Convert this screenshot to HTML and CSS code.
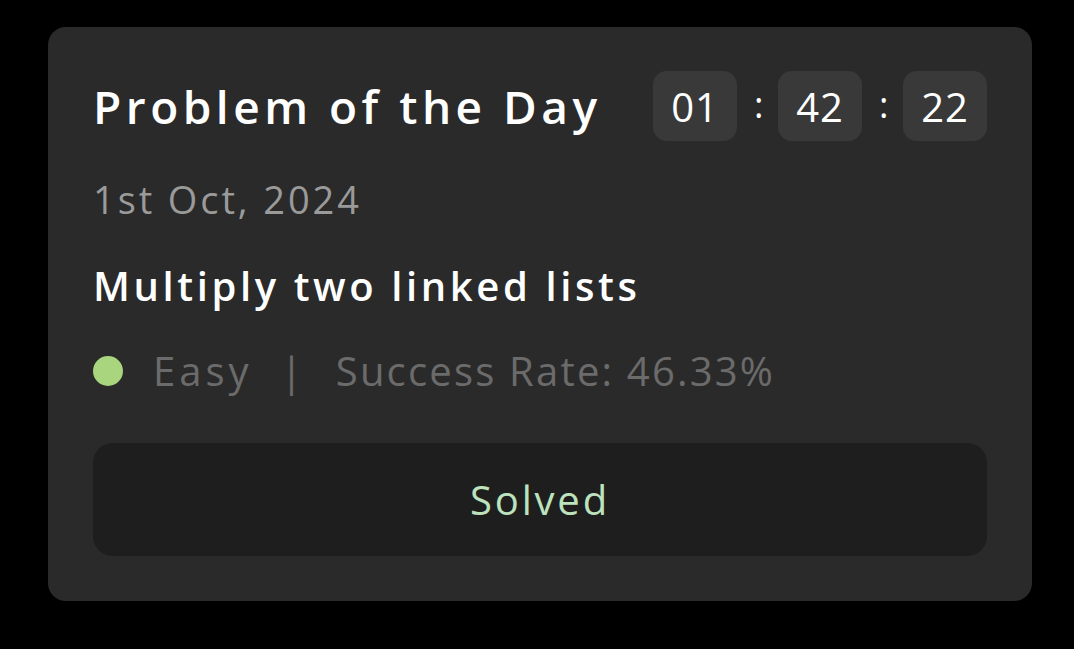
FILE: index.html
```html
<!DOCTYPE html>
<html>
<head>
<meta charset="utf-8">
<link rel="stylesheet" href="styles.css">
</head>
<body>
<div class="card">
  <div class="header">
    <h1 class="title">Problem of the Day</h1>
    <div class="timer">
      <span class="tbox">01</span>
      <span class="colon">:</span>
      <span class="tbox">42</span>
      <span class="colon">:</span>
      <span class="tbox">22</span>
    </div>
  </div>
  <div class="date">1st Oct, 2024</div>
  <div class="problem">Multiply two linked lists</div>
  <div class="meta">
    <span class="dot"></span>
    <span class="level">Easy</span>
    <span class="sep">|</span>
    <span class="rate">Success Rate: 46.33%</span>
  </div>
  <div class="btn">Solved</div>
</div>
</body>
</html>
```
FILE: styles.css
```css
html, body {
  margin: 0;
  padding: 0;
  background: #000;
}
body {
  font-family: "Open Sans", "Noto Sans", sans-serif;
  padding: 27px 0 0 48px;
}
.card {
  width: 984px;
  height: 574px;
  box-sizing: border-box;
  background: #2a2a2a;
  border-radius: 18px;
  padding: 44px 45px 45px 45px;
  display: flex;
  flex-direction: column;
}
.header {
  display: flex;
  align-items: center;
  justify-content: space-between;
  height: 70px;
}
.title {
  margin: 0;
  font-size: 46px;
  font-weight: 600;
  color: #fff;
  letter-spacing: 4.5px;
}
.timer {
  display: flex;
  align-items: center;
  gap: 17px;
}
.tbox {
  width: 84px;
  height: 70px;
  box-sizing: border-box;
  background: #393939;
  border-radius: 14px;
  color: #fff;
  font-size: 40px;
  letter-spacing: 1px;
  display: flex;
  align-items: center;
  justify-content: center;
}
.colon {
  color: #fff;
  font-size: 36px;
  width: 7px;
  text-align: center;
  padding-bottom: 4px;
}
.date {
  margin-top: 36px;
  font-size: 38px;
  color: #9a9a9a;
  line-height: 44px;
  letter-spacing: 2.9px;
}
.problem {
  margin-top: 40px;
  font-size: 40px;
  font-weight: 600;
  color: #fff;
  line-height: 50px;
  letter-spacing: 3.6px;
}
.meta {
  margin-top: 38px;
  display: flex;
  align-items: center;
  font-size: 40px;
  color: #6b6b6b;
  line-height: 44px;
  letter-spacing: 2.2px;
}
.dot {
  width: 30px;
  height: 30px;
  border-radius: 50%;
  background: #a9d57e;
  margin-right: 30px;
}
.level {
  letter-spacing: 4px;
}
.sep {
  margin: 0 31px 0 28px;
}
.btn {
  margin-top: auto;
  height: 113px;
  background: #1e1e1e;
  border-radius: 20px;
  display: flex;
  align-items: center;
  justify-content: center;
  font-size: 40px;
  color: #bde2bd;
  letter-spacing: 2.8px;
}
```
